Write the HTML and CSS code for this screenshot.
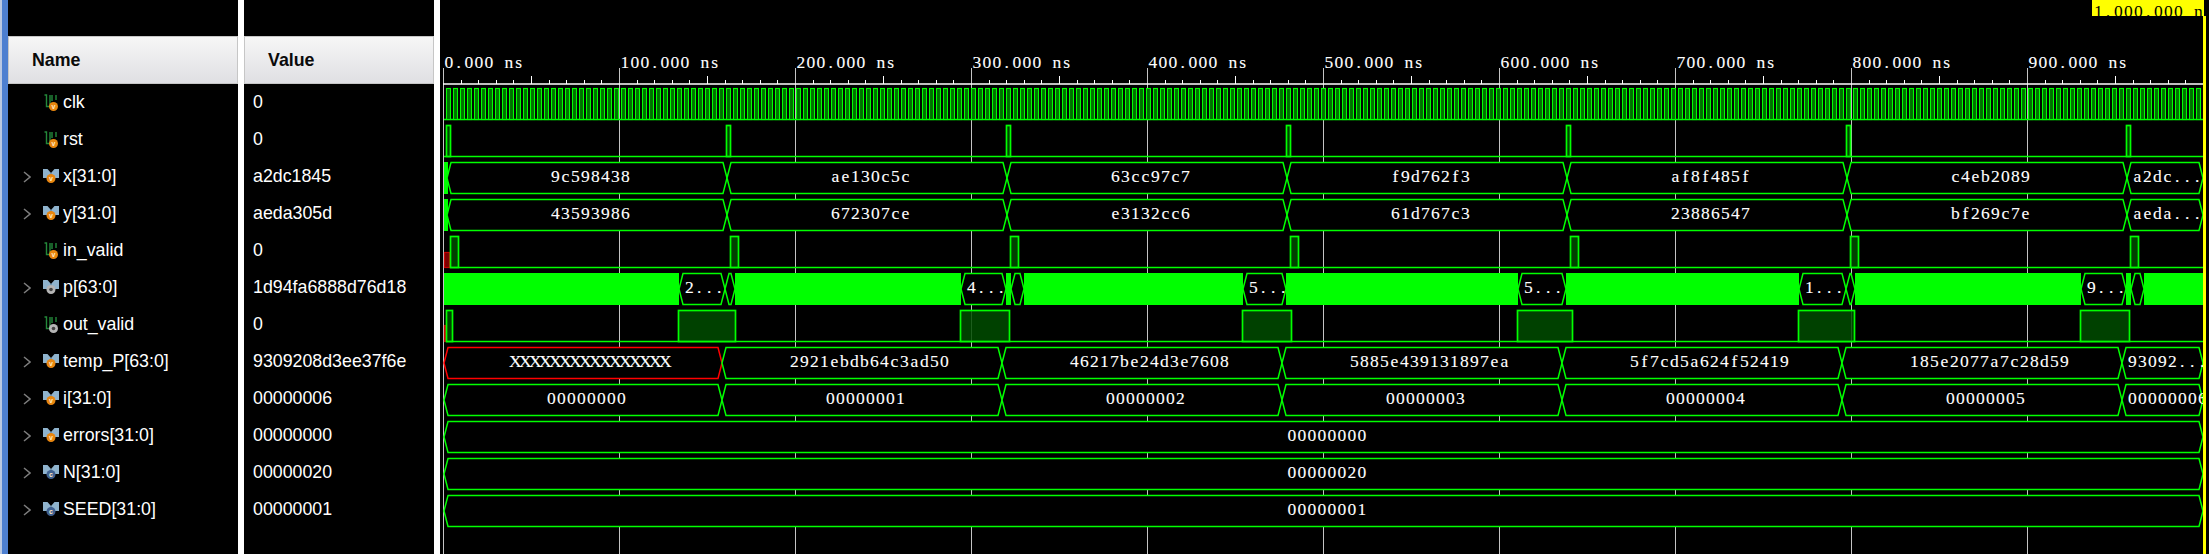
FILE: index.html
```html
<!DOCTYPE html>
<html lang="en">
<head>
    <meta charset="UTF-8">
    <title>Waveform</title>
    <link rel="stylesheet" href="styles.css">
    <script src="waves.js"></script>
</head>
<body>
<!--icon symbols used by the name column-->
<svg class="defs" aria-hidden="true">
    <symbol id="bit-v" viewBox="0 0 16 18">
        <path class="bit-line" d="M1.500 1H3.500V12.500H7V1M9 1V7M13 1V6"/>
        <circle class="dot-orange" cx="10.500" cy="12.500" r="4.500"/>
        <text class="dot-text" x="10.500" y="15">v</text>
    </symbol>
    <symbol id="bit-g" viewBox="0 0 16 18">
        <path class="bit-line" d="M1.500 1H3.500V12.500H7V1M9 1V7M13 1V6"/>
        <circle class="dot-grey" cx="10.500" cy="12.500" r="4.500"/>
        <circle class="dot-hole" cx="10.500" cy="12.500" r="1.800"/>
    </symbol>
    <symbol id="vec-v" viewBox="0 0 16 18">
        <path class="vec-wing" d="M0 1H4.500L8 5L11.500 1H16V10H0Z"/>
        <path class="vec-shade" d="M5 10L8 5L11 10Z"/>
        <circle class="dot-orange" cx="8" cy="10.500" r="4.500"/>
        <text class="dot-text" x="8" y="13">v</text>
    </symbol>
    <symbol id="vec-g" viewBox="0 0 16 18">
        <path class="vec-wing" d="M0 1H4.500L8 5L11.500 1H16V10H0Z"/>
        <path class="vec-shade" d="M5 10L8 5L11 10Z"/>
        <circle class="dot-grey" cx="8" cy="10.500" r="4.500"/>
        <circle class="dot-hole" cx="8" cy="10.500" r="1.800"/>
    </symbol>
    <symbol id="vec-c" viewBox="0 0 16 18">
        <path class="vec-wing" d="M0 1H4.500L8 5L11.500 1H16V10H0Z"/>
        <path class="vec-shade" d="M5 10L8 5L11 10Z"/>
        <circle class="dot-blue" cx="8" cy="10.500" r="4.500"/>
        <text class="dot-text" x="8" y="12.500">c</text>
    </symbol>
    <symbol id="chev" viewBox="0 0 8 12">
        <path class="chev-line" d="M1 1L7 6L1 11"/>
    </symbol>
</svg>

<div class="app">
    <div class="strip"></div>

    <div class="col col-name">
        <div class="head">Name</div>
        <div class="row"><span class="chev"></span><svg class="ico"><use href="#bit-v"/></svg><span>clk</span></div>
        <div class="row"><span class="chev"></span><svg class="ico"><use href="#bit-v"/></svg><span>rst</span></div>
        <div class="row"><svg class="chev"><use href="#chev"/></svg><svg class="ico"><use href="#vec-v"/></svg><span>x[31:0]</span></div>
        <div class="row"><svg class="chev"><use href="#chev"/></svg><svg class="ico"><use href="#vec-v"/></svg><span>y[31:0]</span></div>
        <div class="row"><span class="chev"></span><svg class="ico"><use href="#bit-v"/></svg><span>in_valid</span></div>
        <div class="row"><svg class="chev"><use href="#chev"/></svg><svg class="ico"><use href="#vec-g"/></svg><span>p[63:0]</span></div>
        <div class="row"><span class="chev"></span><svg class="ico"><use href="#bit-g"/></svg><span>out_valid</span></div>
        <div class="row"><svg class="chev"><use href="#chev"/></svg><svg class="ico"><use href="#vec-v"/></svg><span>temp_P[63:0]</span></div>
        <div class="row"><svg class="chev"><use href="#chev"/></svg><svg class="ico"><use href="#vec-v"/></svg><span>i[31:0]</span></div>
        <div class="row"><svg class="chev"><use href="#chev"/></svg><svg class="ico"><use href="#vec-v"/></svg><span>errors[31:0]</span></div>
        <div class="row"><svg class="chev"><use href="#chev"/></svg><svg class="ico"><use href="#vec-c"/></svg><span>N[31:0]</span></div>
        <div class="row"><svg class="chev"><use href="#chev"/></svg><svg class="ico"><use href="#vec-c"/></svg><span>SEED[31:0]</span></div>
    </div>

    <div class="col col-value">
        <div class="head">Value</div>
        <div class="row">0</div>
        <div class="row">0</div>
        <div class="row">a2dc1845</div>
        <div class="row">aeda305d</div>
        <div class="row">0</div>
        <div class="row">1d94fa6888d76d18</div>
        <div class="row">0</div>
        <div class="row">9309208d3ee37f6e</div>
        <div class="row">00000006</div>
        <div class="row">00000000</div>
        <div class="row">00000020</div>
        <div class="row">00000001</div>
    </div>

    <!--waveform canvas, filled in by waves.js-->
    <div class="wave">
        <svg id="waveSvg" class="wave-svg" viewBox="440 0 1766 554"></svg>
    </div>
</div>
</body>
</html>
```

FILE: styles.css
```css
*{
    margin: 0;
    padding: 0;
    box-sizing: border-box;
}
body{
    background-color: #000;
    font-family: "Liberation Sans", Arial, sans-serif;
    font-size: 17.8px;
    color: #fff;
    overflow: hidden;
}
.defs{
    display: none;
}
.app{
    display: flex;
    gap: 6px;
    width: 2209px;
    height: 554px;
    background-color: #fff;
}
.strip{
    width: 8px;
    margin-right: -6px;
    background-color: #4d7fd0;
    border-left: 2px solid #b9c8e2;
}
.col{
    background-color: #000;
    padding-top: 36px;
}
.col-name{
    width: 230px;
}
.col-value{
    width: 190px;
}
/*column header*/
.head{
    height: 48px;
    padding-left: 23px;
    line-height: 46px;
    font-weight: bold;
    color: #0a0a0a;
    background: linear-gradient(#f6f6f6, #dfdfe3);
    border: 1px solid #c6c6c6;
}
.row{
    display: flex;
    align-items: center;
    height: 37px;
}
.col-name .row{
    padding-left: 15px;
}
.col-value .row{
    padding-left: 9px;
}
.chev{
    width: 8px;
    height: 12px;
    margin-right: 12px;
}
.ico{
    width: 16px;
    height: 18px;
    margin-right: 4px;
    flex: none;
}
/*icon parts*/
.chev-line{
    fill: none;
    stroke: #7d7d7d;
    stroke-width: 1.5;
}
.bit-line{
    fill: none;
    stroke: #23893a;
    stroke-width: 1.4;
}
.vec-wing{
    fill: #8fb3cd;
}
.vec-shade{
    fill: #3c5a70;
}
.dot-orange{
    fill: #e8860f;
}
.dot-grey{
    fill: #b5b5b5;
}
.dot-blue{
    fill: #3f6090;
}
.dot-hole{
    fill: #444;
}
.dot-text{
    font-family: "Liberation Sans", sans-serif;
    font-size: 7px;
    font-weight: bold;
    fill: #ffe9c4;
    text-anchor: middle;
}
/*waveform canvas*/
.wave{
    flex: 1;
    height: 100%;
    padding-right: 3px;
    background-color: #000;
}
.wave-svg{
    display: block;
    width: 1766px;
    height: 554px;
}
.grid{
    stroke: #c4c4c4;
    stroke-width: 1;
}
.tick{
    stroke: #fff;
    stroke-width: 1;
}
.ruler{
    stroke: #fff;
    stroke-width: 1.4;
}
.line{
    fill: none;
    stroke: #0f0;
    stroke-width: 1.5;
}
.bus{
    fill: #000;
    stroke: #0f0;
    stroke-width: 1.5;
}
.bus-x{
    fill: #000;
    stroke: #f00;
    stroke-width: 1.5;
}
.solid{
    fill: #0f0;
}
.pulse{
    fill: #004c00;
    fill-opacity: 0.85;
    stroke: #0f0;
    stroke-width: 1.7;
}
.pulse-clk{
    fill: #007000;
    stroke: #0f0;
    stroke-width: 1.1;
}
.pulse-x{
    fill: #7a0000;
    stroke: #c80000;
    stroke-width: 1.2;
}
.wave-text{
    font-family: "Liberation Serif", "Times New Roman", serif;
    font-size: 17.5px;
    fill: #fff;
    stroke: #fff;
    stroke-width: 0.1;
}
.marker-box{
    fill: #ff0;
}
.marker-line{
    fill: #ff0;
}
.marker-text{
    font-family: "Liberation Serif", "Times New Roman", serif;
    font-size: 17.5px;
    fill: #000;
}
```

FILE: waves.js
```js
window.onload=function(){
    var LEFT=444;
    var RIGHT=2203;
    var parts=[];
    //glyphs that are not digit wide get nudged to the middle of their cell
    var NUDGE={f:1.5,a:0.5,c:0.5,e:0.5,s:0.8,".":2,",":2,X:-2,n:0};

    function rowTop(k){
        return 88+37*k;
    }
    function rowBottom(k){
        return 119+37*k;
    }
    //each character sits in a 10px cell, like the fixed pitch font of the simulator
    function label(str,x,y,cls){
        var xs=[];
        for(var i=0;i<str.length;i++){
            xs.push(x+i*10+(NUDGE[str.charAt(i)]||0));
        }
        parts.push('<text class="'+(cls||"wave-text")+'" x="'+xs.join(" ")+'" y="'+y+'">'+str+'</text>');
    }
    function pulse(x1,x2,top,bottom,cls){
        parts.push('<rect class="'+(cls||"pulse")+'" x="'+(x1+0.5)+'" y="'+(top+0.5)+'" width="'+(x2-x1-1)+'" height="'+(bottom-top)+'"/>');
    }
    function baseline(k,x1){
        parts.push('<path class="line" d="M'+x1+' '+(rowBottom(k)+0.5)+'H'+RIGHT+'"/>');
    }
    function solid(x1,x2,k){
        parts.push('<rect class="solid" x="'+x1+'" y="'+rowTop(k)+'" width="'+(x2-x1)+'" height="'+(rowBottom(k)-rowTop(k)+1)+'"/>');
    }
    //hexagon of one bus value
    function bus(x1,x2,k,text,red){
        var t=rowTop(k)+0.5,b=rowBottom(k)+0.5,m=(t+b)/2;
        var pts=[x1,m,x1+4,t,x2-4,t,x2,m,x2-4,b,x1+4,b];
        parts.push('<polygon class="'+(red?"bus-x":"bus")+'" points="'+pts.join(" ")+'"/>');
        if(!text){
            return;
        }
        var base=rowTop(k)+20;
        if(text.indexOf("...")>=0||x2===RIGHT&&x2-x1<100){
            label(text,x1+6,base);
        }else{
            label(text,(x1+x2)/2-4.5*text.length,base);
        }
    }
    //row of bus values that change at the same places
    function busRow(k,cuts,values,first){
        for(var i=0;i<values.length;i++){
            bus(cuts[i],cuts[i+1],k,values[i],first&&i===0);
        }
    }

    //time axis
    for(var t=0;t<10;t++){
        var gx=443+176*t+0.5;
        parts.push('<line class="grid" x1="'+gx+'" y1="68" x2="'+gx+'" y2="554"/>');
        label(t*100+".000 ns",gx+1,68);
    }
    for(var n=1;n<100;n++){
        if(n%10===0){
            continue;
        }
        var tx=Math.round(443+17.6*n)+0.5;
        parts.push('<line class="tick" x1="'+tx+'" y1="'+(n%5===0?76:80)+'" x2="'+tx+'" y2="84"/>');
    }
    parts.push('<line class="ruler" x1="443" y1="84" x2="'+RIGHT+'" y2="84"/>');

    //clk
    baseline(0,LEFT);
    for(var c=446;c<RIGHT-3;c+=7){
        pulse(c,c+5,rowTop(0),rowBottom(0),"pulse-clk");
    }
    //rst
    baseline(1,LEFT);
    for(var r=0;r<7;r++){
        pulse(446+280*r,451+280*r,rowTop(1),rowBottom(1));
    }
    //x and y change at the same time
    var cutsA=[447,727,1007,1287,1567,1847,2127,RIGHT];
    solid(LEFT,448,2);
    busRow(2,cutsA,["9c598438","ae130c5c","63cc97c7","f9d762f3","af8f485f","c4eb2089","a2dc..."]);
    solid(LEFT,448,3);
    busRow(3,cutsA,["43593986","672307ce","e3132cc6","61d767c3","23886547","bf269c7e","aeda..."]);
    //in_valid
    baseline(4,450);
    pulse(LEFT,450,rowTop(4)+16,rowBottom(4),"pulse-x");
    for(var v=0;v<7;v++){
        pulse(450+280*v,459+280*v,rowTop(4),rowBottom(4));
    }
    //p
    var greens=[[LEFT,679],[735,961],[1006,1011],[1024,1243],[1286,1518],[1566,1799],[1855,2081],[2126,2131],[2144,RIGHT]];
    for(var g=0;g<greens.length;g++){
        solid(greens[g][0],greens[g][1],5);
    }
    var gaps=[[679,725,"2..."],[725,735],[961,1006,"4..."],[1011,1024],[1243,1286,"5..."],[1518,1566,"5..."],[1799,1846,"1..."],[1846,1855],[2081,2126,"9..."],[2131,2144]];
    for(var d=0;d<gaps.length;d++){
        bus(gaps[d][0],gaps[d][1],5,gaps[d][2]);
    }
    //out_valid
    baseline(6,446);
    pulse(LEFT,446,rowTop(6)+15,rowBottom(6),"pulse-x");
    var outs=[[446,453],[678,736],[960,1010],[1242,1292],[1517,1573],[1798,1855],[2080,2130]];
    for(var o=0;o<outs.length;o++){
        pulse(outs[o][0],outs[o][1],rowTop(6),rowBottom(6));
    }
    //temp_P and i
    var cutsB=[LEFT,722,1002,1282,1562,1842,2122,RIGHT];
    busRow(7,cutsB,["XXXXXXXXXXXXXXXX","2921ebdb64c3ad50","46217be24d3e7608","5885e439131897ea","5f7cd5a624f52419","185e2077a7c28d59","93092..."],true);
    busRow(8,cutsB,["00000000","00000001","00000002","00000003","00000004","00000005","00000006"]);
    //constants
    bus(LEFT,RIGHT,9,"00000000");
    bus(LEFT,RIGHT,10,"00000020");
    bus(LEFT,RIGHT,11,"00000001");

    //yellow end cursor
    parts.push('<clipPath id="markerClip"><rect x="2092" y="0" width="112" height="16"/></clipPath>');
    parts.push('<rect class="marker-box" x="2092" y="0" width="112" height="16"/>');
    parts.push('<g clip-path="url(#markerClip)">');
    label("1,000.000 ns",2094,17,"marker-text");
    parts.push('</g>');
    parts.push('<rect class="marker-line" x="2203" y="16" width="3" height="538"/>');

    document.getElementById("waveSvg").innerHTML=parts.join("");
};
```
